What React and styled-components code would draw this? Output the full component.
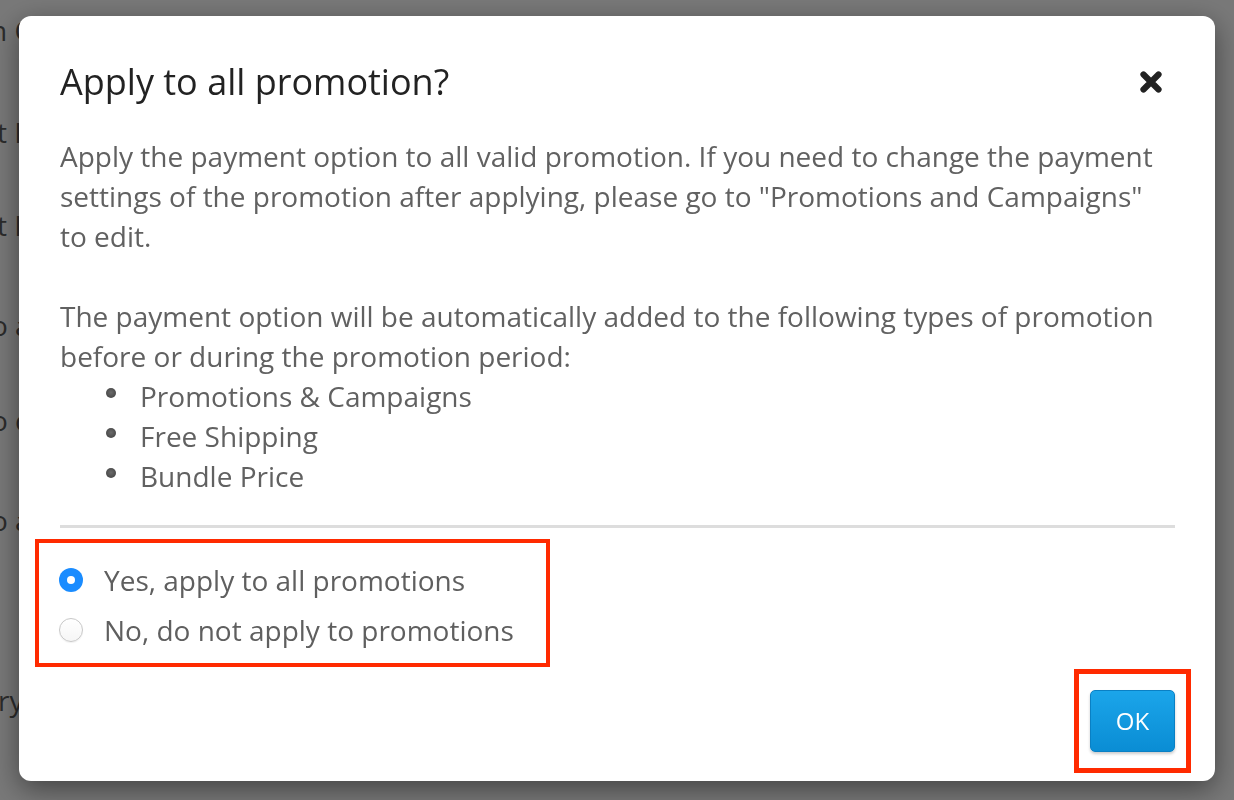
import React, { useState } from "react";
import styled, { createGlobalStyle } from "styled-components";

const GlobalStyle = createGlobalStyle`
  html, body {
    margin: 0;
    padding: 0;
  }
  body {
    width: 1234px;
    height: 800px;
    overflow: hidden;
    background: #ffffff;
    font-family: "Open Sans", "Liberation Sans", sans-serif;
  }
`;

// the page behind the dialog, only the first letters of its labels peek out
const backRows = [
  { text: "n C", shift: 10, gap: 10 },
  { text: "t P", shift: 3, gap: 62 },
  { text: "t P", shift: 3, gap: 53 },
  { text: "o a", shift: 9, gap: 60 },
  { text: "o c", shift: 9, gap: 55 },
  { text: "o a", shift: 9, gap: 60 },
  { text: "ry", shift: 2, gap: 140 },
];

const promoTypes = ["Promotions & Campaigns", "Free Shipping", "Bundle Price"];

const App = () => {
  const [apply, setApply] = useState("yes");

  return (
    <>
      <GlobalStyle />
      <BackPage>
        {backRows.map((row, i) => (
          <BackRow key={i} $shift={row.shift} $gap={row.gap}>
            {row.text}
          </BackRow>
        ))}
      </BackPage>
      <Overlay>
        <Modal>
          <Header>
            <Title>Apply to all promotion?</Title>
            <CloseButton aria-label="close">
              <svg width="24" height="24" viewBox="0 0 24 24">
                <path
                  d="M4.5 4.5 L19.5 19.5 M19.5 4.5 L4.5 19.5"
                  stroke="#222"
                  strokeWidth="6.2"
                  strokeLinecap="round"
                  fill="none"
                />
              </svg>
            </CloseButton>
          </Header>
          <Body>
            <Paragraph>
              Apply the payment option to all valid promotion. If you need to
              change the payment settings of the promotion after applying,
              please go to "Promotions and Campaigns" to edit.
            </Paragraph>
            <Paragraph $spaced>
              The payment option will be automatically added to the following
              types of promotion before or during the promotion period:
            </Paragraph>
            <BulletList>
              {promoTypes.map((t) => (
                <Bullet key={t}>{t}</Bullet>
              ))}
            </BulletList>
          </Body>
          <Divider />
          <Highlight $variant="radios">
            <RadioRow onClick={() => setApply("yes")}>
              <Radio $checked={apply === "yes"} />
              <RadioLabel>Yes, apply to all promotions</RadioLabel>
            </RadioRow>
            <RadioRow onClick={() => setApply("no")}>
              <Radio $checked={apply === "no"} />
              <RadioLabel>No, do not apply to promotions</RadioLabel>
            </RadioRow>
          </Highlight>
          <Footer>
            <Highlight $variant="button">
              <OkButton>OK</OkButton>
            </Highlight>
          </Footer>
        </Modal>
      </Overlay>
    </>
  );
};
export default App;

const BackPage = styled.div`
  display: flex;
  flex-direction: column;
  width: 36px;
  height: 800px;
  overflow: hidden;
  background: #ffffff;
`;

const BackRow = styled.div`
  margin-top: ${(p) => p.$gap}px;
  margin-left: -${(p) => p.$shift}px;
  font-size: 28px;
  line-height: 40px;
  color: #5c5c5c;
  white-space: nowrap;
`;

const Overlay = styled.div`
  position: fixed;
  inset: 0;
  background: rgba(0, 0, 0, 0.53);
  display: flex;
  align-items: flex-start;
  justify-content: center;
  padding-top: 16px;
  box-sizing: border-box;
`;

const Modal = styled.div`
  width: 1196px;
  box-sizing: border-box;
  padding: 42px 40px 8px 41px;
  background: #ffffff;
  border-radius: 12px;
  box-shadow: 0 8px 28px rgba(0, 0, 0, 0.45);
  display: flex;
  flex-direction: column;
`;

const Header = styled.div`
  display: flex;
  align-items: center;
  justify-content: space-between;
  height: 48px;
`;

const Title = styled.h2`
  margin: 0;
  font-size: 36px;
  font-weight: 400;
  line-height: 48px;
  color: #222222;
`;

const CloseButton = styled.button`
  border: none;
  background: none;
  padding: 0;
  margin-right: 12px;
  width: 24px;
  height: 24px;
  display: flex;
  cursor: pointer;
`;

const Body = styled.div`
  margin-top: 30px;
  font-size: 28px;
  line-height: 40px;
  color: #616161;
`;

const Paragraph = styled.p`
  margin: ${(p) => (p.$spaced ? "40px" : "0")} 0 0;
`;

const BulletList = styled.ul`
  margin: 0;
  padding-left: 80px;
  list-style: none;
`;

const Bullet = styled.li`
  position: relative;
  &::before {
    content: "";
    position: absolute;
    left: -34px;
    top: 12px;
    width: 10px;
    height: 10px;
    border-radius: 50%;
    background: radial-gradient(circle at 50% 45%, #6a6a6a 0%, #4a4a4a 70%, #3a3a3a 100%);
  }
`;

const Divider = styled.div`
  margin-top: 29px;
  height: 3px;
  background: #dddddd;
`;

const Highlight = styled.div`
  box-sizing: border-box;
  border-style: solid;
  border-color: #ff2a00;
  ${(p) =>
    p.$variant === "radios"
      ? `
    margin: 11px 0 0 -25px;
    width: 515px;
    border-width: 4px;
    padding: 12px 0 8px 20px;
    display: flex;
    flex-direction: column;
  `
      : `
    border-width: 5px;
    padding: 16px 11px;
    display: flex;
  `}
`;

const RadioRow = styled.label`
  display: flex;
  align-items: center;
  gap: 21px;
  height: 50px;
  cursor: pointer;
`;

const Radio = styled.span`
  width: 24px;
  height: 24px;
  border-radius: 50%;
  box-sizing: border-box;
  flex-shrink: 0;
  position: relative;
  ${(p) =>
    p.$checked
      ? `
    background: #1a8cff;
    &::after {
      content: "";
      position: absolute;
      left: 8px;
      top: 8px;
      width: 8px;
      height: 8px;
      border-radius: 50%;
      background: #ffffff;
    }
  `
      : `
    background: linear-gradient(#ffffff, #f6f6f6);
    border: 1px solid #c8c8c8;
    box-shadow: 0 1px 1px rgba(0, 0, 0, 0.06);
  `}
`;

const RadioLabel = styled.span`
  font-size: 28px;
  line-height: 40px;
  color: #5f5f5f;
  white-space: nowrap;
`;

const Footer = styled.div`
  display: flex;
  justify-content: flex-end;
  margin: 2px -16px 0 0;
`;

const OkButton = styled.button`
  width: 85px;
  height: 62px;
  border: 1px solid #0a80c4;
  border-radius: 5px;
  background: linear-gradient(#1ba5ea, #0a8dd4);
  box-shadow: 0 2px 3px rgba(0, 0, 0, 0.2);
  color: #ffffff;
  font-family: "Open Sans", "Liberation Sans", sans-serif;
  font-size: 24px;
  line-height: 1;
  padding: 0;
  cursor: pointer;
`;
